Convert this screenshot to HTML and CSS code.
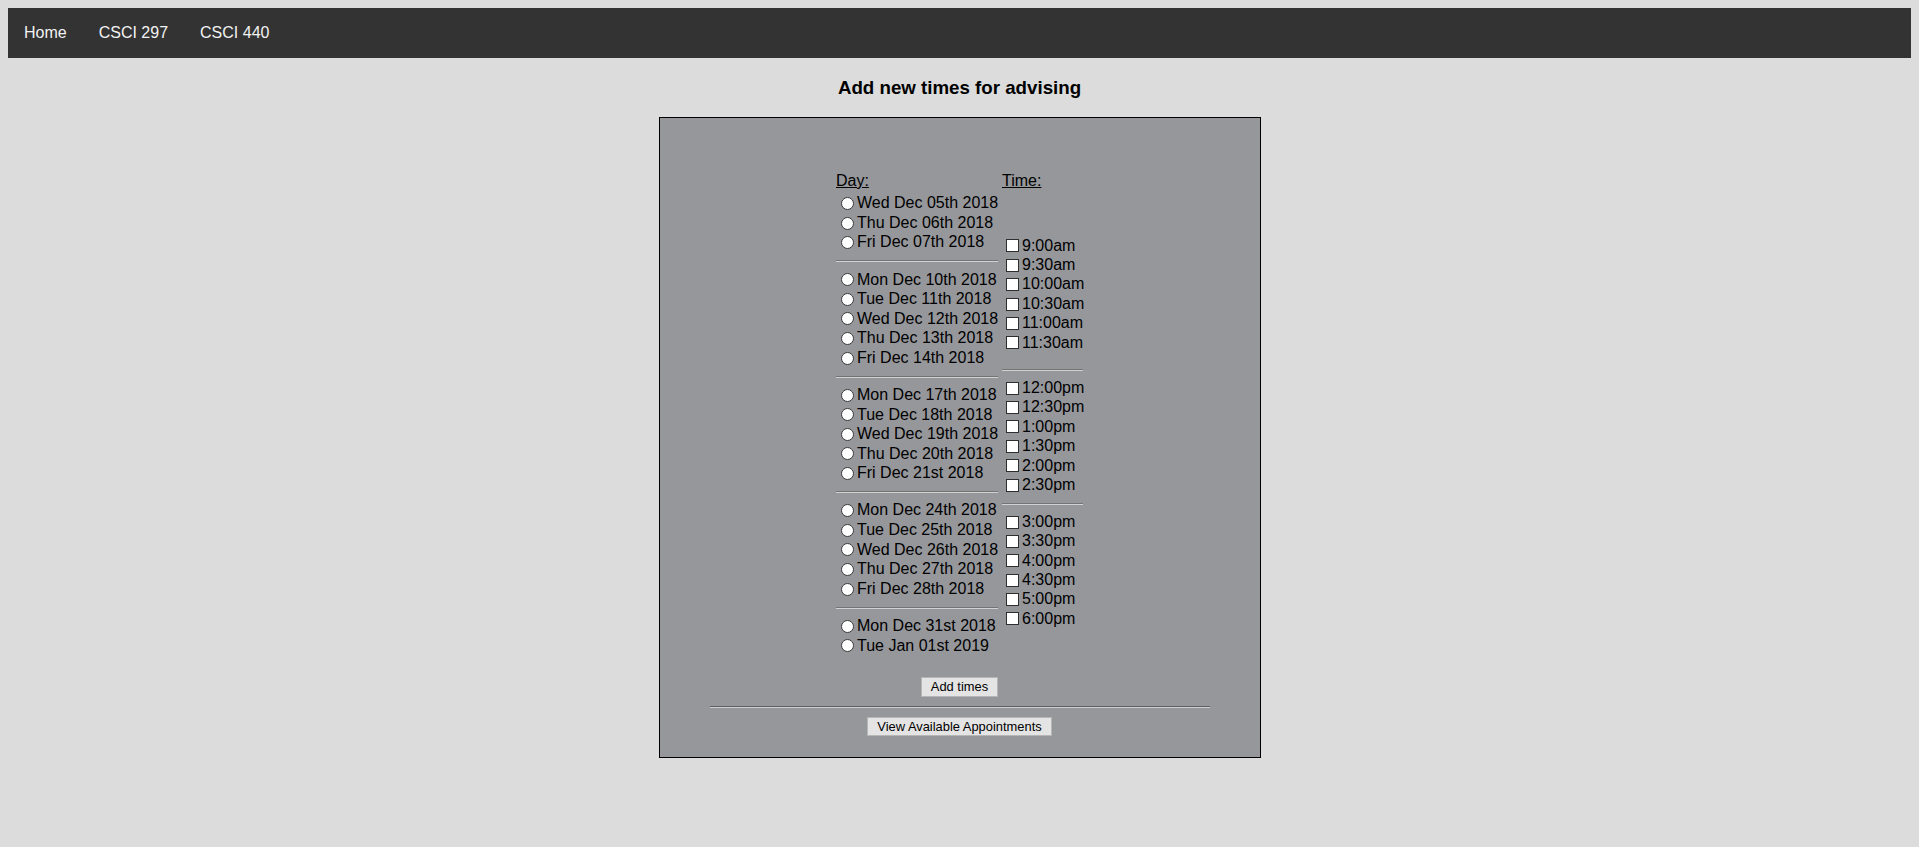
FILE: index.html
```html
<!DOCTYPE html>
<html lang="en">
<head>
<meta charset="utf-8">
<title>Advising</title>
<link rel="stylesheet" href="styles.css">
</head>
<body>
<nav class="topnav">
  <a href="#">Home</a>
  <a href="#">CSCI 297</a>
  <a href="#">CSCI 440</a>
</nav>
<h3 class="title">Add new times for advising</h3>
<div class="panel">
  <form class="times-form">
    <div class="picker">
      <div class="col-label">Day:</div>
      <div class="col-label">Time:</div>
      <div class="days">
        <label class="opt"><input type="radio" name="day">Wed Dec 05th 2018</label>
        <label class="opt"><input type="radio" name="day">Thu Dec 06th 2018</label>
        <label class="opt"><input type="radio" name="day">Fri Dec 07th 2018</label>
        <hr class="sep">
        <label class="opt"><input type="radio" name="day">Mon Dec 10th 2018</label>
        <label class="opt"><input type="radio" name="day">Tue Dec 11th 2018</label>
        <label class="opt"><input type="radio" name="day">Wed Dec 12th 2018</label>
        <label class="opt"><input type="radio" name="day">Thu Dec 13th 2018</label>
        <label class="opt"><input type="radio" name="day">Fri Dec 14th 2018</label>
        <hr class="sep">
        <label class="opt"><input type="radio" name="day">Mon Dec 17th 2018</label>
        <label class="opt"><input type="radio" name="day">Tue Dec 18th 2018</label>
        <label class="opt"><input type="radio" name="day">Wed Dec 19th 2018</label>
        <label class="opt"><input type="radio" name="day">Thu Dec 20th 2018</label>
        <label class="opt"><input type="radio" name="day">Fri Dec 21st 2018</label>
        <hr class="sep">
        <label class="opt"><input type="radio" name="day">Mon Dec 24th 2018</label>
        <label class="opt"><input type="radio" name="day">Tue Dec 25th 2018</label>
        <label class="opt"><input type="radio" name="day">Wed Dec 26th 2018</label>
        <label class="opt"><input type="radio" name="day">Thu Dec 27th 2018</label>
        <label class="opt"><input type="radio" name="day">Fri Dec 28th 2018</label>
        <hr class="sep">
        <label class="opt"><input type="radio" name="day">Mon Dec 31st 2018</label>
        <label class="opt"><input type="radio" name="day">Tue Jan 01st 2019</label>
      </div>
      <div class="times">
        <label class="opt"><input type="checkbox">9:00am</label>
        <label class="opt"><input type="checkbox">9:30am</label>
        <label class="opt"><input type="checkbox">10:00am</label>
        <label class="opt"><input type="checkbox">10:30am</label>
        <label class="opt"><input type="checkbox">11:00am</label>
        <label class="opt"><input type="checkbox">11:30am</label>
        <hr class="sep sep-wide">
        <label class="opt"><input type="checkbox">12:00pm</label>
        <label class="opt"><input type="checkbox">12:30pm</label>
        <label class="opt"><input type="checkbox">1:00pm</label>
        <label class="opt"><input type="checkbox">1:30pm</label>
        <label class="opt"><input type="checkbox">2:00pm</label>
        <label class="opt"><input type="checkbox">2:30pm</label>
        <hr class="sep">
        <label class="opt"><input type="checkbox">3:00pm</label>
        <label class="opt"><input type="checkbox">3:30pm</label>
        <label class="opt"><input type="checkbox">4:00pm</label>
        <label class="opt"><input type="checkbox">4:30pm</label>
        <label class="opt"><input type="checkbox">5:00pm</label>
        <label class="opt"><input type="checkbox">6:00pm</label>
      </div>
    </div>
    <div class="actions add-row">
      <button type="button" class="btn">Add times</button>
    </div>
  </form>
  <hr class="rule">
  <div class="actions">
    <button type="button" class="btn">View Available Appointments</button>
  </div>
</div>
</body>
</html>
```
FILE: styles.css
```css
body {
  margin: 8px;
  background: #dcdcdc;
  font-family: "Liberation Sans", Arial, sans-serif;
  font-size: 16px;
  color: #000;
}

.topnav {
  display: flex;
  align-items: center;
  height: 50px;
  background: #333333;
}

.topnav a {
  color: #f2f2f2;
  text-decoration: none;
  padding: 0 16px;
  font-size: 16px;
  line-height: 18.4px;
}

.title {
  margin: 18.72px 0;
  font-size: 18.72px;
  line-height: 21.5px;
  font-weight: bold;
  text-align: center;
}

.panel {
  width: 500px;
  margin: 0 auto;
  padding: 50px 50px 21px;
  border: 1px solid #000;
  background: #96979b;
}

.times-form {
  margin: 0;
}

.picker {
  display: grid;
  grid-template-columns: 162px 81px;
  column-gap: 4px;
  row-gap: 3.3px;
  justify-content: center;
}

.col-label {
  padding-top: 4px;
  line-height: 18.4px;
  text-decoration: underline;
}

.days,
.times {
  display: flex;
  flex-direction: column;
  align-self: start;
}

.times {
  margin-top: 42.5px;
}

.opt {
  display: flex;
  align-items: center;
  height: 19.6px;
  line-height: 18.4px;
  white-space: nowrap;
}

.times .opt {
  height: 19.4px;
}

.opt input {
  -webkit-appearance: none;
  appearance: none;
  flex: none;
  box-sizing: border-box;
  width: 13px;
  height: 13px;
  margin: 0 3px 0 5px;
  background: #fff;
  border: 1px solid #2e2e2e;
}

.opt input[type="radio"] {
  border-radius: 50%;
  border-color: #3a3a3a;
}

.times .opt input {
  margin: 0 3px 0 4px;
}

.sep {
  margin: 7.75px 0;
  height: 0;
  border: 0;
  border-top: 1px solid #737373;
  border-bottom: 1px solid #d2d2d2;
}

.sep-wide {
  margin-top: 16.25px;
}

.actions {
  display: flex;
  justify-content: center;
}

.add-row {
  margin-top: 21.6px;
}

.btn {
  box-sizing: border-box;
  height: 19.4px;
  padding: 0 9px;
  font-family: "Liberation Sans", Arial, sans-serif;
  font-size: 12.9px;
  line-height: 17.4px;
  color: #000;
  background: #e4e4e4;
  border: 1px solid #b6b6b6;
  border-radius: 0;
}

.rule {
  margin: 9px 0 9.6px;
  height: 0;
  border: 0;
  border-top: 1px solid #5e5e5e;
  border-bottom: 1px solid #cfcfcf;
}
```
